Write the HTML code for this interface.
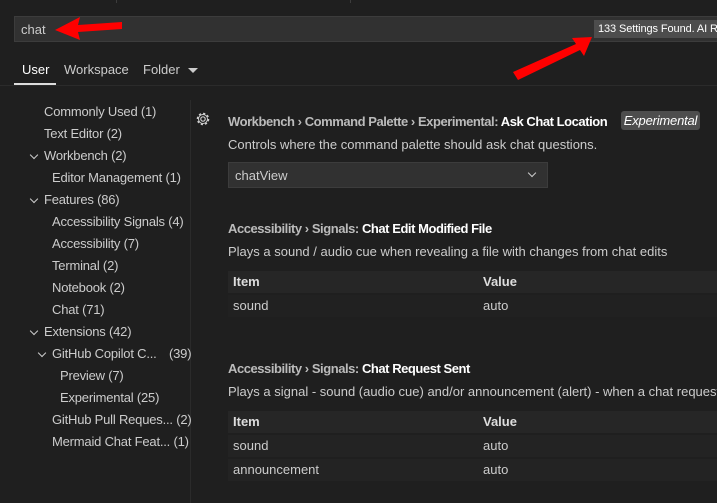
<!DOCTYPE html>
<html><head><style>
body{margin:0;width:717px;height:503px;background:#1f1f1f;font-family:"Liberation Sans",sans-serif;font-size:13px;color:#ccc;position:relative;overflow:hidden}
.a{position:absolute;white-space:nowrap}
.t{position:absolute;white-space:nowrap;line-height:22px;height:22px;letter-spacing:-0.2px}
.chev{display:inline-block;width:5px;height:5px;border-right:1.2px solid #ccc;border-bottom:1.2px solid #ccc;transform:rotate(45deg);position:absolute}
.b{color:#fff;font-weight:bold}
.g{color:#bbb;font-weight:bold}
.h{letter-spacing:-0.45px}
.row{position:absolute;left:228px;width:489px;height:22px;line-height:22px}
</style></head><body>
<div class="a" style="left:116px;top:0;width:1px;height:3px;background:#3c3c3c"></div>
<div class="a" style="left:350px;top:0;width:1px;height:3px;background:#3c3c3c"></div>
<div class="a" style="left:14px;top:16px;width:703px;height:24px;background:#313131;border:1px solid #3c3c3c;border-right:none"></div>
<div class="a" style="left:21px;top:22px;color:#ccc">chat</div>
<div class="a" style="left:594px;top:20px;width:123px;height:18px;background:#4d4d4d;color:#fff;font-size:11px;line-height:18px;padding-left:4px;letter-spacing:-0.1px">133 Settings Found. AI R</div>
<div class="a" style="left:22px;top:62px;color:#fff">User</div>
<div class="a" style="left:64px;top:62px">Workspace</div>
<div class="a" style="left:143px;top:62px">Folder</div>
<div class="a" style="left:188px;top:68px;width:0;height:0;border-left:5px solid transparent;border-right:5px solid transparent;border-top:5px solid #ccc"></div>
<div class="a" style="left:0;top:85px;width:717px;height:1px;background:#2b2b2b"></div>
<div class="a" style="left:14px;top:83px;width:42px;height:2px;background:#ddd"></div>
<div class="a" style="left:190px;top:100px;width:1px;height:403px;background:#2b2b2b"></div>
<div class="t" style="left:44px;top:101px">Commonly Used (1)</div>
<div class="t" style="left:44px;top:123px">Text Editor (2)</div>
<div class="chev" style="left:31px;top:152px"></div><div class="t" style="left:44px;top:145px">Workbench (2)</div>
<div class="t" style="left:52px;top:167px">Editor Management (1)</div>
<div class="chev" style="left:31px;top:196px"></div><div class="t" style="left:44px;top:189px">Features (86)</div>
<div class="t" style="left:52px;top:211px">Accessibility Signals (4)</div>
<div class="t" style="left:52px;top:233px">Accessibility (7)</div>
<div class="t" style="left:52px;top:255px">Terminal (2)</div>
<div class="t" style="left:52px;top:277px">Notebook (2)</div>
<div class="t" style="left:52px;top:299px">Chat (71)</div>
<div class="chev" style="left:31px;top:328px"></div><div class="t" style="left:44px;top:321px">Extensions (42)</div>
<div class="chev" style="left:39px;top:350px"></div><div class="t" style="left:52px;top:343px">GitHub Copilot C...</div><div class="t" style="left:169px;top:343px">(39)</div>
<div class="t" style="left:60px;top:365px">Preview (7)</div>
<div class="t" style="left:60px;top:387px">Experimental (25)</div>
<div class="t" style="left:52px;top:409px">GitHub Pull Reques... (2)</div>
<div class="t" style="left:52px;top:431px">Mermaid Chat Feat... (1)</div>
<svg class="a" style="left:195px;top:111px" width="16" height="16" viewBox="0 0 16 16"><circle cx="8" cy="8" r="2.2" fill="none" stroke="#ccc" stroke-width="1.2"/><circle cx="8" cy="8" r="5.5" fill="none" stroke="#ccc" stroke-width="1.6" stroke-dasharray="2.2 2.1"/><circle cx="8" cy="8" r="4.5" fill="none" stroke="#ccc" stroke-width="1"/></svg>
<div class="a h" style="left:228px;top:114px"><span class="g">Workbench › Command Palette › Experimental: </span><span class="b">Ask Chat Location</span></div>
<div class="a" style="left:621px;top:111px;width:79px;height:19px;background:#4d4d4d;border-radius:3px;color:#fff;font-style:italic;line-height:19px;text-align:center;letter-spacing:-0.2px">Experimental</div>
<div class="a" style="left:228px;top:137px">Controls where the command palette should ask chat questions.</div>
<div class="a" style="left:228px;top:162px;width:318px;height:24px;background:#313131;border:1px solid #3c3c3c"></div>
<div class="a" style="left:235px;top:168px">chatView</div>
<div class="chev" style="left:529px;top:170px"></div>
<div class="a h" style="left:228px;top:221px"><span class="g">Accessibility › Signals: </span><span class="b">Chat Edit Modified File</span></div>
<div class="a" style="left:228px;top:244px">Plays a sound / audio cue when revealing a file with changes from chat edits</div>
<div class="row" style="top:271px;background:#262626"><span class="a b" style="left:5px;color:#ddd">Item</span><span class="a b" style="left:255px;color:#ddd">Value</span></div>
<div class="row" style="top:295px;background:#212121"><span class="a" style="left:5px">sound</span><span class="a" style="left:255px">auto</span></div>
<div class="a h" style="left:228px;top:361px"><span class="g">Accessibility › Signals: </span><span class="b">Chat Request Sent</span></div>
<div class="a" style="left:228px;top:384px">Plays a signal - sound (audio cue) and/or announcement (alert) - when a chat request</div>
<div class="row" style="top:411px;background:#262626"><span class="a b" style="left:5px;color:#ddd">Item</span><span class="a b" style="left:255px;color:#ddd">Value</span></div>
<div class="row" style="top:435px;background:#232323"><span class="a" style="left:5px">sound</span><span class="a" style="left:255px">auto</span></div>
<div class="row" style="top:459px;background:#232323"><span class="a" style="left:5px">announcement</span><span class="a" style="left:255px">auto</span></div>
<svg class="a" style="left:0;top:0" width="717" height="503"><g fill="#f00"><polygon points="55,30 80,17 78,25 122,22 122,29 78,32 80,40"/><polygon points="592,37 584,56 580,50 518,80 513,72 576,44 572,38"/></g></svg>
</body></html>
